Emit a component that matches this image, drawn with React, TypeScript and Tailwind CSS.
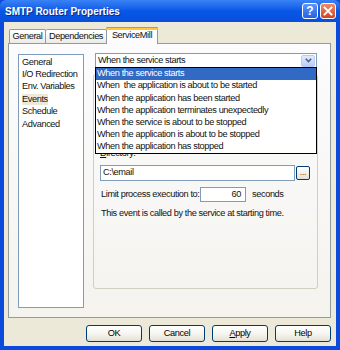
import React from 'react';

const pages = ['General', 'I/O Redirection', 'Env. Variables', 'Events', 'Schedule', 'Advanced'];

const events = [
  'When the service starts',
  'When  the application is about to be started',
  'When the application has been started',
  'When the application terminates unexpectedly',
  'When the service is about to be stopped',
  'When the application is about to be stopped',
  'When the application has stopped',
];

const XpButton = ({ children }: { children: React.ReactNode }) => (
  <button className="w-[56px] h-[17px] rounded-[3px] border border-[#003C74] bg-gradient-to-b from-[#FFFFFF] via-[#F6F5F0] to-[#E3E1D6] text-black leading-none flex items-center justify-center">
    {children}
  </button>
);

export default function App() {
  return (
    <div className="w-[340px] h-[350px] flex flex-col bg-[#0A4BDE] font-['Liberation_Sans',Arial,sans-serif] text-[9.2px] tracking-[-0.38px] text-[#111] select-none">
      {/* Title bar */}
      <div className="h-[22px] flex items-center pl-[5px] pr-[4px] bg-gradient-to-b from-[#3A82F6] via-[#0757E6] to-[#0A4EDC] rounded-t-[6px]">
        <span className="text-white font-bold text-[10px] tracking-normal [text-shadow:1px_1px_0_#0A2A8A]">
          SMTP Router Properties
        </span>
        <div className="ml-auto flex gap-[2px]">
          <div className="w-[16px] h-[16px] rounded-[3px] border border-white bg-gradient-to-b from-[#5C95FA] to-[#2460E6] flex items-center justify-center text-white font-bold text-[12px] leading-none tracking-normal">
            ?
          </div>
          <div className="w-[16px] h-[16px] rounded-[3px] border border-white bg-gradient-to-b from-[#EE8A6A] to-[#D0431F] flex items-center justify-center">
            <svg width="10" height="10" viewBox="0 0 10 10">
              <path d="M1.5 1.5 L8.5 8.5 M8.5 1.5 L1.5 8.5" stroke="white" strokeWidth="1.8" strokeLinecap="square" />
            </svg>
          </div>
        </div>
      </div>

      {/* Dialog body */}
      <div className="flex-1 mx-[4px] mb-[4px] bg-[#ECE9D8] flex flex-col pt-[4px] pl-[4px] pr-[5px]">
        {/* Tabs */}
        <div className="h-[17px] flex items-end pl-[1px]">
          <div className="w-[37px] h-[14px] border border-b-0 border-[#919B9C] rounded-t-[2px] bg-gradient-to-b from-white to-[#ECEBE6] flex items-center justify-center">
            General
          </div>
          <div className="w-[61px] h-[14px] border border-b-0 border-l-0 border-[#919B9C] rounded-t-[2px] bg-gradient-to-b from-white to-[#ECEBE6] flex items-center justify-center">
            Dependencies
          </div>
          <div className="relative -ml-[1px] w-[52px] h-[17px] border border-b-0 border-[#919B9C] rounded-t-[2px] bg-[#FCFCFE] flex items-center justify-center pb-[1px] z-10 -mb-[1px]">
            <div className="absolute -top-[1px] -left-[1px] -right-[1px] h-[3px] bg-[#FFC83C] rounded-t-[2px] border-t border-[#E68B2C]" />
            ServiceMill
          </div>
        </div>

        {/* Tab page */}
        <div className="h-[275px] border border-[#919B9C] bg-gradient-to-b from-[#FCFCFE] to-[#F4F3EE] flex pl-[9px] pt-[10px] pb-[9px] pr-[12px] gap-[9px]">
          <div className="w-[66px] border border-[#7F9DB9] bg-white pt-[1px] px-[3px]">
            {pages.map((p) => (
              <div key={p} className="h-[12.4px] flex items-center">
                <span className={p === 'Events' ? 'bg-[#ECE9D8] leading-[11px]' : 'leading-[11px]'}>{p}</span>
              </div>
            ))}
          </div>

          <div className="relative flex-1 flex flex-col -mt-[1px]">
            {/* Combo box */}
            <div className="ml-[2px] mr-[1px] h-[15px] border border-[#7F9DB9] bg-white flex items-center pl-[2px] pr-[1px]">
              <span>When the service starts</span>
              <div className="ml-auto w-[14px] h-[12px] rounded-[2px] border border-[#B9CCF5] bg-gradient-to-b from-[#E2EBFE] to-[#B9CDF8] flex items-center justify-center">
                <svg width="7" height="5" viewBox="0 0 7 5">
                  <path d="M0.8 0.8 L3.5 3.5 L6.2 0.8" stroke="#4D6185" strokeWidth="1.6" fill="none" />
                </svg>
              </div>
            </div>

            {/* Group box, its upper part hidden by the open list */}
            <div className="mt-[6px] mb-[19px] flex-1 border border-[#D0D0BF] rounded-[3px] pt-[74px] pl-[6px] pr-[7px] flex flex-col">
              <div className="h-[9px] leading-[9px] overflow-hidden">
                <span className="underline">D</span>irectory:
              </div>
              <div className="mt-[7px] flex">
                <div className="flex-1 h-[16px] border border-[#7F9DB9] bg-white flex items-center pl-[2px]">C:\email</div>
                <div className="ml-[1px] mt-[1px] w-[14px] h-[14px] rounded-[2px] border border-[#003C74] bg-gradient-to-b from-white to-[#E3E1D6] flex items-end justify-center pb-[2px] text-[8px] leading-none tracking-normal">
                  ...
                </div>
              </div>
              <div className="mt-[6px] flex items-center h-[15px]">
                <span className="w-[100px] pl-[1px]">Limit process execution to:</span>
                <div className="w-[46px] h-[15px] border border-[#7F9DB9] bg-white flex items-center justify-end pr-[4px]">60</div>
                <span className="ml-[6px]">seconds</span>
              </div>
              <div className="mt-[6px] leading-[11px] pl-[1px]">This event is called by the service at starting time.</div>
            </div>

            {/* Open dropdown list */}
            <div className="absolute top-[14px] left-[2px] right-[1px] h-[87px] border border-black bg-white z-20">
              {events.map((e, i) => (
                <div
                  key={e}
                  className={
                    i === 0
                      ? 'h-[12.2px] flex items-center pl-[1px] whitespace-pre bg-[#316AC5] text-white'
                      : 'h-[12.2px] flex items-center pl-[1px] whitespace-pre'
                  }
                >
                  {e}
                </div>
              ))}
            </div>
          </div>
        </div>

        {/* Buttons */}
        <div className="mt-[7px] flex justify-end gap-[7px]">
          <XpButton>OK</XpButton>
          <XpButton>Cancel</XpButton>
          <XpButton>
            <span>
              <span className="underline">A</span>pply
            </span>
          </XpButton>
          <XpButton>Help</XpButton>
        </div>
      </div>
    </div>
  );
}
